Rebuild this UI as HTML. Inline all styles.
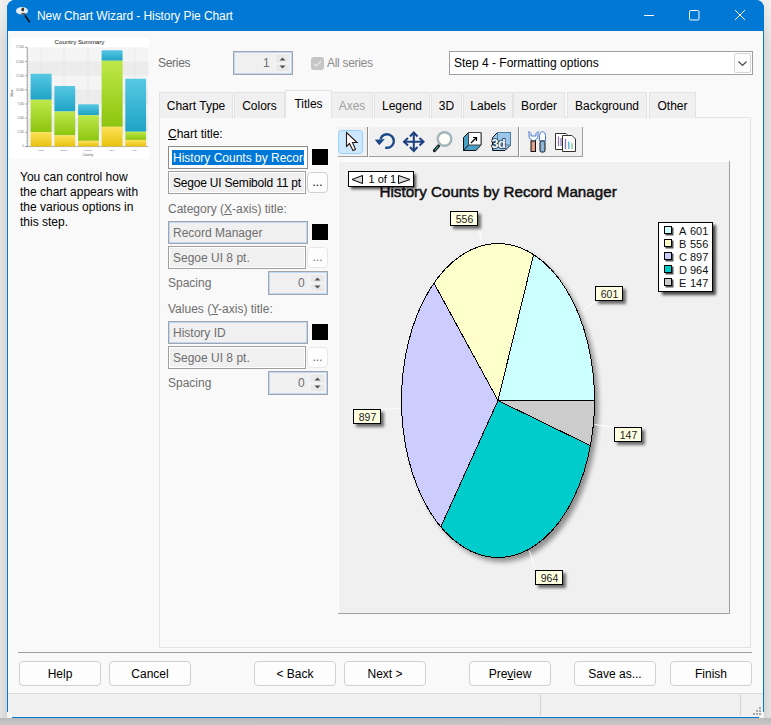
<!DOCTYPE html>
<html><head><meta charset="utf-8">
<style>
*{box-sizing:border-box;margin:0;padding:0}
html,body{width:771px;height:725px;overflow:hidden}
body{position:relative;background:#dedede;font-family:"Liberation Sans",sans-serif;font-size:12px;color:#000}
.a{position:absolute}
.t{position:absolute;white-space:nowrap;line-height:1}
#win{left:7px;top:0;width:757px;height:718px;border:1px solid #0078d4;border-radius:8px 8px 0 0;background:#f9f9f9;overflow:hidden}
#title{left:7px;top:0;width:757px;height:31px;background:#0078d4;border-radius:8px 8px 0 0}
.tab{position:absolute;top:92px;height:26px;background:#f0f0f0;border:1px solid #e3e3e3;border-bottom:none}
.tab span{position:absolute;top:6px;left:0;right:0;text-align:center;white-space:nowrap}
.box{position:absolute;border:1px solid #a0a0a0;background:#f0f0f0}
.btn{position:absolute;height:25px;width:82px;top:661px;background:#fdfdfd;border:1px solid #d0d0d0;border-radius:4px;text-align:center;line-height:24px}
.sw{position:absolute;left:312px;width:16px;height:16px;background:#000}
.dots{position:absolute;left:307px;width:21px;height:21px;border:1px solid #d0d0d0;border-radius:4px;background:#fdfdfd;text-align:center;line-height:19px}
.spin{position:absolute;border:1px solid #a2a6ac;background:#f0f0f0;box-shadow:inset 0 0 0 1px #bcd8f6}
.gray{color:#6e6e6e}
</style></head><body>
<div class="a" style="left:0;top:0;width:7px;height:725px;background:linear-gradient(180deg,rgba(255,255,255,.55) 0,rgba(255,255,255,0) 45px),linear-gradient(90deg,#e3e3e3,#d5d5d5)"></div><div class="a" style="left:7px;top:0;width:10px;height:10px;background:#eeeeee"></div>
<div class="a" style="left:764px;top:0;width:7px;height:725px;background:linear-gradient(180deg,rgba(255,255,255,.55) 0,rgba(255,255,255,0) 45px),linear-gradient(90deg,#d5d5d5,#e3e3e3)"></div><div class="a" style="left:754px;top:0;width:10px;height:10px;background:#eeeeee"></div>
<div class="a" style="left:0;top:718px;width:771px;height:7px;background:linear-gradient(180deg,#b9b9b9,#c8c8c8)"></div>

<div class="a" id="win"></div>
<div class="a" id="title"></div>
<svg class="a" style="left:0;top:0" width="771" height="31" viewBox="0 0 771 31">
<ellipse cx="22" cy="10.9" rx="6" ry="3.8" fill="#e6eff8"/>
<ellipse cx="22.8" cy="9.6" rx="1.4" ry="2" fill="#4a3220"/>
<path d="M20 14.6Q22.5 11.6 26.5 14.2Z" fill="#3a2a1a"/>
<path d="M24.8 15.2L29.8 22.2" stroke="#111" stroke-width="1.5"/>
<path d="M644 15.5H654" stroke="#fff" stroke-width="1"/>
<rect x="689.5" y="10.5" width="9.5" height="9.5" rx="1.2" fill="none" stroke="#fff" stroke-width="1"/>
<path d="M735 10L745 20M745 10L735 20" stroke="#fff" stroke-width="1"/>
</svg>
<div class="t" style="left:37px;top:10px;color:#fff;letter-spacing:-0.08px">New Chart Wizard - History Pie Chart</div>

<!-- thumbnail -->
<svg class="a" style="left:10px;top:38px" width="139" height="121" viewBox="10 38 139 121" font-family="Liberation Sans">
<defs>
<linearGradient id="gb" x1="0" y1="0" x2="0" y2="1"><stop offset="0" stop-color="#56c8e4"/><stop offset="1" stop-color="#1fa3c6"/></linearGradient>
<linearGradient id="gg" x1="0" y1="0" x2="0" y2="1"><stop offset="0" stop-color="#bfe84a"/><stop offset="1" stop-color="#8cc50e"/></linearGradient>
<linearGradient id="gy" x1="0" y1="0" x2="0" y2="1"><stop offset="0" stop-color="#fde25a"/><stop offset="1" stop-color="#e7c20c"/></linearGradient>
</defs>
<rect x="10" y="38" width="139" height="121" fill="#fff"/>
<rect x="27" y="47.4" width="121.5" height="99" fill="#f4f4f4"/>
<rect x="27" y="61.5" width="121.5" height="14.1" fill="#ececec"/><rect x="27" y="89.8" width="121.5" height="14.1" fill="#ececec"/><rect x="27" y="118.1" width="121.5" height="14.1" fill="#ececec"/><line x1="25" y1="47.4" x2="27" y2="47.4" stroke="#777" stroke-width=".6"/><text x="24" y="48.4" font-size="2.6" text-anchor="end" fill="#666">17,500</text><line x1="25" y1="61.5" x2="27" y2="61.5" stroke="#777" stroke-width=".6"/><text x="24" y="62.5" font-size="2.6" text-anchor="end" fill="#666">15,000</text><line x1="25" y1="75.7" x2="27" y2="75.7" stroke="#777" stroke-width=".6"/><text x="24" y="76.7" font-size="2.6" text-anchor="end" fill="#666">12,500</text><line x1="25" y1="89.8" x2="27" y2="89.8" stroke="#777" stroke-width=".6"/><text x="24" y="90.8" font-size="2.6" text-anchor="end" fill="#666">10,000</text><line x1="25" y1="104.0" x2="27" y2="104.0" stroke="#777" stroke-width=".6"/><text x="24" y="105.0" font-size="2.6" text-anchor="end" fill="#666">7,500</text><line x1="25" y1="118.1" x2="27" y2="118.1" stroke="#777" stroke-width=".6"/><text x="24" y="119.1" font-size="2.6" text-anchor="end" fill="#666">5,000</text><line x1="25" y1="132.3" x2="27" y2="132.3" stroke="#777" stroke-width=".6"/><text x="24" y="133.3" font-size="2.6" text-anchor="end" fill="#666">2,500</text><line x1="25" y1="146.4" x2="27" y2="146.4" stroke="#777" stroke-width=".6"/><text x="24" y="147.4" font-size="2.6" text-anchor="end" fill="#666">0</text><line x1="41" y1="47.4" x2="41" y2="146.4" stroke="#e2e2e2" stroke-width=".5"/><line x1="64" y1="47.4" x2="64" y2="146.4" stroke="#e2e2e2" stroke-width=".5"/><line x1="88" y1="47.4" x2="88" y2="146.4" stroke="#e2e2e2" stroke-width=".5"/><line x1="112" y1="47.4" x2="112" y2="146.4" stroke="#e2e2e2" stroke-width=".5"/><line x1="135" y1="47.4" x2="135" y2="146.4" stroke="#e2e2e2" stroke-width=".5"/>
<line x1="27.3" y1="47.5" x2="27.3" y2="146.8" stroke="#8a8a8a" stroke-width=".7"/><line x1="26.3" y1="48.00" x2="28" y2="48.00" stroke="#999" stroke-width=".4"/><line x1="26.3" y1="50.81" x2="28" y2="50.81" stroke="#999" stroke-width=".4"/><line x1="26.3" y1="53.62" x2="28" y2="53.62" stroke="#999" stroke-width=".4"/><line x1="26.3" y1="56.44" x2="28" y2="56.44" stroke="#999" stroke-width=".4"/><line x1="26.3" y1="59.25" x2="28" y2="59.25" stroke="#999" stroke-width=".4"/><line x1="26.3" y1="62.06" x2="28" y2="62.06" stroke="#999" stroke-width=".4"/><line x1="26.3" y1="64.87" x2="28" y2="64.87" stroke="#999" stroke-width=".4"/><line x1="26.3" y1="67.68" x2="28" y2="67.68" stroke="#999" stroke-width=".4"/><line x1="26.3" y1="70.50" x2="28" y2="70.50" stroke="#999" stroke-width=".4"/><line x1="26.3" y1="73.31" x2="28" y2="73.31" stroke="#999" stroke-width=".4"/><line x1="26.3" y1="76.12" x2="28" y2="76.12" stroke="#999" stroke-width=".4"/><line x1="26.3" y1="78.93" x2="28" y2="78.93" stroke="#999" stroke-width=".4"/><line x1="26.3" y1="81.74" x2="28" y2="81.74" stroke="#999" stroke-width=".4"/><line x1="26.3" y1="84.56" x2="28" y2="84.56" stroke="#999" stroke-width=".4"/><line x1="26.3" y1="87.37" x2="28" y2="87.37" stroke="#999" stroke-width=".4"/><line x1="26.3" y1="90.18" x2="28" y2="90.18" stroke="#999" stroke-width=".4"/><line x1="26.3" y1="92.99" x2="28" y2="92.99" stroke="#999" stroke-width=".4"/><line x1="26.3" y1="95.80" x2="28" y2="95.80" stroke="#999" stroke-width=".4"/><line x1="26.3" y1="98.62" x2="28" y2="98.62" stroke="#999" stroke-width=".4"/><line x1="26.3" y1="101.43" x2="28" y2="101.43" stroke="#999" stroke-width=".4"/><line x1="26.3" y1="104.24" x2="28" y2="104.24" stroke="#999" stroke-width=".4"/><line x1="26.3" y1="107.05" x2="28" y2="107.05" stroke="#999" stroke-width=".4"/><line x1="26.3" y1="109.86" x2="28" y2="109.86" stroke="#999" stroke-width=".4"/><line x1="26.3" y1="112.68" x2="28" y2="112.68" stroke="#999" stroke-width=".4"/><line x1="26.3" y1="115.49" x2="28" y2="115.49" stroke="#999" stroke-width=".4"/><line x1="26.3" y1="118.30" x2="28" y2="118.30" stroke="#999" stroke-width=".4"/><line x1="26.3" y1="121.11" x2="28" y2="121.11" stroke="#999" stroke-width=".4"/><line x1="26.3" y1="123.92" x2="28" y2="123.92" stroke="#999" stroke-width=".4"/><line x1="26.3" y1="126.74" x2="28" y2="126.74" stroke="#999" stroke-width=".4"/><line x1="26.3" y1="129.55" x2="28" y2="129.55" stroke="#999" stroke-width=".4"/><line x1="26.3" y1="132.36" x2="28" y2="132.36" stroke="#999" stroke-width=".4"/><line x1="26.3" y1="135.17" x2="28" y2="135.17" stroke="#999" stroke-width=".4"/><line x1="26.3" y1="137.98" x2="28" y2="137.98" stroke="#999" stroke-width=".4"/><line x1="26.3" y1="140.80" x2="28" y2="140.80" stroke="#999" stroke-width=".4"/><line x1="26.3" y1="143.61" x2="28" y2="143.61" stroke="#999" stroke-width=".4"/><line x1="26.3" y1="146.42" x2="28" y2="146.42" stroke="#999" stroke-width=".4"/>
<line x1="26" y1="146.6" x2="148.5" y2="146.6" stroke="#777" stroke-width=".6"/>
<rect x="30.6" y="73.8" width="21.0" height="25.9" fill="url(#gb)" rx=".8"/><rect x="30.6" y="99.7" width="21.0" height="32.4" fill="url(#gg)"/><rect x="30.6" y="132.1" width="21.0" height="14.3" fill="url(#gy)"/><rect x="54.4" y="85.9" width="20.8" height="25.6" fill="url(#gb)" rx=".8"/><rect x="54.4" y="111.5" width="20.8" height="23.9" fill="url(#gg)"/><rect x="54.4" y="135.4" width="20.8" height="11.0" fill="url(#gy)"/><rect x="78.1" y="104.2" width="20.8" height="11.0" fill="url(#gb)" rx=".8"/><rect x="78.1" y="115.2" width="20.8" height="25.6" fill="url(#gg)"/><rect x="78.1" y="140.8" width="20.8" height="5.6" fill="url(#gy)"/><rect x="101.6" y="50.2" width="21.0" height="10.5" fill="url(#gb)" rx=".8"/><rect x="101.6" y="60.7" width="21.0" height="66.1" fill="url(#gg)"/><rect x="101.6" y="126.8" width="21.0" height="19.6" fill="url(#gy)"/><rect x="125.3" y="78.8" width="20.8" height="52.9" fill="url(#gb)" rx=".8"/><rect x="125.3" y="131.7" width="20.8" height="8.2" fill="url(#gg)"/><rect x="125.3" y="139.9" width="20.8" height="6.5" fill="url(#gy)"/>
<text x="79.5" y="43.6" font-size="6.2" text-anchor="middle" fill="#111">Country Summary</text>
<text x="88" y="155.5" font-size="3" text-anchor="middle" fill="#555">Country</text>
<text x="12.5" y="97" font-size="3" fill="#555" transform="rotate(-90 12.5 97)">Value</text>
<g font-size="2.5" fill="#666" text-anchor="middle"><text x="41" y="150.5">India</text><text x="64" y="150.5">Brazil</text><text x="88" y="150.5">France</text><text x="112" y="150.5">Italy</text><text x="135" y="150.5">USA</text></g>
</svg>


<div class="t" style="left:20px;top:170px;line-height:15px;white-space:normal;width:130px">You can control how<br>the chart appears with<br>the various options in<br>this step.</div>

<div class="t gray" style="left:158px;top:57px;letter-spacing:-0.3px">Series</div>
<div class="spin" style="left:233px;top:51px;width:60px;height:24px"></div><svg class="a" style="left:233px;top:51px" width="60" height="24" viewBox="0 0 60 24">
<rect x="42" y="3" width="15" height="9" fill="#e9e9e9" stroke="#f6f6f6"/>
<rect x="42" y="13" width="15" height="8" fill="#e9e9e9" stroke="#f6f6f6"/>
<path d="M46.5 9.5L49.5 6.5L52.5 9.5Z" fill="#555"/>
<path d="M46.5 14.5L49.5 17.5L52.5 14.5Z" fill="#555"/>
</svg>
<div class="t gray" style="left:263px;top:57px">1</div>

<div class="a" style="left:311px;top:57px;width:13px;height:13px;background:#c6c6c6;border-radius:3px"></div><svg class="a" style="left:311px;top:57px" width="13" height="13"><path d="M3 6.8L5.3 9L10 4.2" fill="none" stroke="#ececec" stroke-width="1.1"/></svg>
<div class="t" style="left:327px;top:57px;color:#8a8a8a;letter-spacing:-0.3px">All series</div>

<div class="a" style="left:449px;top:51px;width:304px;height:24px;background:#fff;border:1px solid #a0a0a0"></div>
<div class="t" style="left:454px;top:57px">Step 4 - Formatting options</div><div class="a" style="left:734px;top:53px;width:17px;height:20px;border:1px solid #d6d6d6;border-radius:2px;background:#fcfcfc"></div><svg class="a" style="left:734px;top:53px" width="17" height="20"><path d="M4.5 8.5L8.5 12.5L12.5 8.5" fill="none" stroke="#444" stroke-width="1.1"/></svg>

<!-- panel -->
<div class="a" style="left:159px;top:117px;width:592px;height:531px;border:1px solid #e3e3e3;background:#f9f9f9"></div>

<div class="tab" style="left:159px;width:74px"><span>Chart Type</span></div>
<div class="tab" style="left:234px;width:51px"><span>Colors</span></div>
<div class="tab" style="left:374px;width:56px"><span>Legend</span></div>
<div class="tab" style="left:431px;width:31px"><span>3D</span></div>
<div class="tab" style="left:463px;width:50px"><span>Labels</span></div>
<div class="tab" style="left:513px;width:52px"><span>Border</span></div>
<div class="tab" style="left:567px;width:80px"><span>Background</span></div>
<div class="tab" style="left:649px;width:47px"><span>Other</span></div>
<div class="tab" style="left:331px;width:42px;color:#a0a0a0"><span>Axes</span></div>
<div class="tab" style="left:285px;top:90px;height:28px;width:47px;background:#f9f9f9"><span style="top:6px">Titles</span></div>


<!-- form -->
<div class="t" style="left:168px;top:128px"><u>C</u>hart title:</div>
<div class="a" style="left:168px;top:146px;width:140px;height:23px;border:1px solid #8c8c8c;background:#fff;overflow:hidden">
 <div class="a" style="left:3px;top:3px;width:132px;height:15px;background:#0078d7"></div>
 <div class="t" style="left:4px;top:5px;color:#fff">History Counts by Record</div>
</div>
<div class="sw" style="top:149px"></div>
<div class="a" style="left:168px;top:171px;width:138px;height:23px;border:1px solid #a0a0a0;background:#f0f0f0;box-shadow:inset 0 0 0 1px #fff"></div>
<div class="t" style="left:173px;top:177px;letter-spacing:-0.2px">Segoe UI Semibold 11 pt</div>
<div class="dots" style="top:172px">...</div>
<div class="t gray" style="left:168px;top:203px">Category (<u>X</u>-axis) title:</div>
<div class="a" style="left:168px;top:221px;width:140px;height:23px;border:1px solid #a2a6ac;background:#f0f0f0;box-shadow:inset 0 0 0 1px #bcd8f6"></div>
<div class="t gray" style="left:173px;top:227px">Record Manager</div>
<div class="sw" style="top:224px"></div>
<div class="a" style="left:168px;top:246px;width:138px;height:23px;border:1px solid #a0a0a0;background:#f0f0f0;box-shadow:inset 0 0 0 1px #fff"></div>
<div class="t gray" style="left:173px;top:252px">Segoe UI 8 pt.</div>
<div class="dots" style="top:247px;border-color:#e8e8e8;color:#6e6e6e">...</div>
<div class="t gray" style="left:168px;top:277px">Spacing</div>
<div class="spin" style="left:268px;top:271px;width:60px;height:24px"></div><svg class="a" style="left:268px;top:271px" width="60" height="24" viewBox="0 0 60 24">
<rect x="42" y="3" width="15" height="9" fill="#e9e9e9" stroke="#f6f6f6"/>
<rect x="42" y="13" width="15" height="8" fill="#e9e9e9" stroke="#f6f6f6"/>
<path d="M46.5 9.5L49.5 6.5L52.5 9.5Z" fill="#555"/>
<path d="M46.5 14.5L49.5 17.5L52.5 14.5Z" fill="#555"/>
</svg>
<div class="t gray" style="left:298px;top:277px">0</div>
<div class="t gray" style="left:168px;top:303px">Values (<u>Y</u>-axis) title:</div>
<div class="a" style="left:168px;top:321px;width:140px;height:23px;border:1px solid #a2a6ac;background:#f0f0f0;box-shadow:inset 0 0 0 1px #bcd8f6"></div>
<div class="t gray" style="left:173px;top:327px">History ID</div>
<div class="sw" style="top:324px"></div>
<div class="a" style="left:168px;top:346px;width:138px;height:23px;border:1px solid #a0a0a0;background:#f0f0f0;box-shadow:inset 0 0 0 1px #fff"></div>
<div class="t gray" style="left:173px;top:352px">Segoe UI 8 pt.</div>
<div class="dots" style="top:347px;border-color:#e8e8e8;color:#6e6e6e">...</div>
<div class="t gray" style="left:168px;top:377px">Spacing</div>
<div class="spin" style="left:268px;top:371px;width:60px;height:24px"></div><svg class="a" style="left:268px;top:371px" width="60" height="24" viewBox="0 0 60 24">
<rect x="42" y="3" width="15" height="9" fill="#e9e9e9" stroke="#f6f6f6"/>
<rect x="42" y="13" width="15" height="8" fill="#e9e9e9" stroke="#f6f6f6"/>
<path d="M46.5 9.5L49.5 6.5L52.5 9.5Z" fill="#555"/>
<path d="M46.5 14.5L49.5 17.5L52.5 14.5Z" fill="#555"/>
</svg>
<div class="t gray" style="left:298px;top:377px">0</div>


<!-- toolbar -->
<svg class="a" style="left:336px;top:124px" width="250" height="36" viewBox="336 124 250 36">
<rect x="338" y="127" width="245" height="30" fill="#f0f0f0"/>
<line x1="338" y1="156.5" x2="583" y2="156.5" stroke="#a0a0a0"/>
<line x1="582.5" y1="127" x2="582.5" y2="157" stroke="#a0a0a0"/>
<line x1="367.5" y1="127" x2="367.5" y2="157" stroke="#8c8c8c"/>
<line x1="368.5" y1="127" x2="368.5" y2="157" stroke="#fff"/>
<line x1="518.5" y1="127" x2="518.5" y2="157" stroke="#8c8c8c"/>
<line x1="519.5" y1="127" x2="519.5" y2="157" stroke="#fff"/>
<rect x="338.5" y="130.5" width="24" height="23" rx="3" fill="#cce8ff" stroke="#99d1ff"/>
<!-- arrow -->
<path d="M346.5 132.5V146.5L349.5 143.5L353 150.5L355.5 149.5L352.5 142.5H357Z" fill="#fff" stroke="#2a1a10" stroke-width="1.1" stroke-linejoin="miter"/>
<!-- undo -->
<path d="M380.6 138.8A6.8 6.8 0 1 1 385.2 147.6" fill="none" stroke="#1a4a88" stroke-width="2.5"/>
<path d="M374.8 139.8L384.8 139L379.3 145.2Z" fill="#1a4a88"/>
<!-- move -->
<g fill="none" stroke="#1c3f80" stroke-width="2">
<path d="M413.8 133V151M404.5 141.8H423"/>
<path d="M410 136.5L413.8 132.5L417.5 136.5M410 147L413.8 151L417.5 147M408 138L404 141.8L408 145.5M419.5 138L423.5 141.8L419.5 145.5"/>
</g>
<!-- magnifier -->
<path d="M438.5 146L434.5 150.5" stroke="#111" stroke-width="3.2" stroke-linecap="round"/>
<path d="M438.3 146.2L434.7 150.3" stroke="#3aa39a" stroke-width="1.2"/>
<circle cx="444.5" cy="139" r="6.8" fill="#fffef8" stroke="#a4b4bc" stroke-width="2.4"/>
<!-- box1 -->
<path d="M463.5 137.5L468.5 132.5H481V145L476 150.5H463.5Z" fill="#4a9fc4" stroke="#111" stroke-width="1"/>
<path d="M468.5 132.5H481V145H468.5Z" fill="#fff" stroke="#444" stroke-width="1"/>
<path d="M468.5 145L463.5 150.5" stroke="#111"/>
<path d="M471 143L476.5 137.5M473 137.5H476.5V141" fill="none" stroke="#000" stroke-width="1.2"/>
<!-- 3d box -->
<path d="M492.5 137.5L497.5 132.5H510.5V145L505 150.5H492.5Z" fill="#9cc7ea" stroke="#111" stroke-width="1"/>
<path d="M497.5 132.5H510.5V145H497.5ZM497.5 145L492.5 150.5" fill="none" stroke="#4a7fa8"/>
<text x="491.5" y="148" font-family="Liberation Sans" font-weight="bold" font-size="12.5" letter-spacing="-0.5" fill="#fff" stroke="#12324a" stroke-width="1.6" paint-order="stroke">3d</text>
<!-- tools -->
<path d="M529 131.5V136Q529 139 531.5 139.5V141H535.5V139.5Q538 139 538 136V131.5L536 133.5V136H531V133.5Z" fill="#fff" stroke="#4a78d0" stroke-width="1"/>
<rect x="531" y="141" width="4.5" height="10.5" fill="#e2a08a" stroke="#111" stroke-width="1"/>
<path d="M539.5 141V135.5Q539.5 132 542.5 131.5Q545.5 132 545.5 135.5V141Z" fill="#fff" stroke="#4a78d0" stroke-width="1"/>
<rect x="540" y="141" width="5" height="11" rx="1.5" fill="#8fb8dc" stroke="#111" stroke-width="1"/>
<!-- docs -->
<path d="M555.5 133.5H566L567 134.5V149.5H555.5Z" fill="#fff" stroke="#333"/>
<path d="M562.5 135.5H572L575.5 139V151.5H562.5Z" fill="#fff" stroke="#333"/>
<path d="M558.5 136.5V146M561 138V146" stroke="#8c6fb0" stroke-width="1.2"/>
<path d="M565.5 139V149" stroke="#8c6fb0" stroke-width="1.3"/>
<path d="M568.8 141.5V149" stroke="#4aa8d8" stroke-width="1.3"/>
<path d="M572 143V149" stroke="#80c880" stroke-width="1.3"/>
</svg>

<!-- chart area -->
<svg class="a" style="left:338px;top:161px" width="392" height="453" viewBox="338 161 392 453" font-family="Liberation Sans">
<defs><filter id="bl" x="-50%" y="-50%" width="200%" height="200%"><feGaussianBlur stdDeviation="1.5"/></filter>
<filter id="bl2" x="-20%" y="-20%" width="140%" height="140%"><feGaussianBlur stdDeviation="2.5"/></filter>
<filter id="bl1" x="-50%" y="-50%" width="200%" height="200%"><feGaussianBlur stdDeviation=".7"/></filter></defs>
<rect x="338" y="161" width="392" height="453" fill="#f0f0f0"/>
<line x1="338" y1="161.5" x2="729" y2="161.5" stroke="#fff"/>
<line x1="338.5" y1="161" x2="338.5" y2="613" stroke="#fff"/>
<line x1="729.5" y1="161" x2="729.5" y2="614" stroke="#a0a0a0"/>
<line x1="338" y1="613.5" x2="730" y2="613.5" stroke="#a0a0a0"/>
<ellipse cx="502" cy="405" rx="96.5" ry="157" fill="#000" opacity=".4" filter="url(#bl2)"/>
<path d="M498 400.5L594.50 400.50A96.5 157 0 0 0 533.59 254.57Z" fill="#ccffff"/>
<path d="M498 400.5L533.59 254.57A96.5 157 0 0 0 433.93 283.10Z" fill="#ffffcc"/>
<path d="M498 400.5L433.93 283.10A96.5 157 0 0 0 440.78 526.92Z" fill="#ccccff"/>
<path d="M498 400.5L440.78 526.92A96.5 157 0 0 0 590.42 445.67Z" fill="#00cccc"/>
<path d="M498 400.5L590.42 445.67A96.5 157 0 0 0 594.50 400.50Z" fill="#cccccc"/>
<g stroke="#000" stroke-width="1" fill="none" shape-rendering="crispEdges">
<ellipse cx="498" cy="400.5" rx="96.5" ry="157"/>
<path d="M498 400.5L594.5 400.5M498 400.5L533.59 254.57M498 400.5L433.93 283.10M498 400.5L440.78 526.92M498 400.5L590.42 445.67"/>
</g>
<g stroke="#fff" stroke-width="1" fill="none">
<path d="M478.5 225L482 245"/>
<path d="M595 301.5L583 311"/>
<path d="M381 409.5L401 408.5"/>
<path d="M594.5 424.5L614 427.5"/>
<path d="M529.5 551L535.5 570"/>
</g>
<rect x="453" y="214" width="28" height="15" fill="#000" opacity=".55" filter="url(#bl)"/>
<rect x="450.5" y="211.5" width="27" height="14" fill="#ffffe1" stroke="#000"/>
<text x="464.5" y="223" text-anchor="middle" font-size="10.5" fill="#222">556</text><rect x="598" y="289" width="28" height="15" fill="#000" opacity=".55" filter="url(#bl)"/>
<rect x="595.5" y="286.5" width="27" height="14" fill="#ffffe1" stroke="#000"/>
<text x="609.5" y="298" text-anchor="middle" font-size="10.5" fill="#222">601</text><rect x="356" y="412" width="28" height="15" fill="#000" opacity=".55" filter="url(#bl)"/>
<rect x="353.5" y="409.5" width="27" height="14" fill="#ffffe1" stroke="#000"/>
<text x="367.5" y="421" text-anchor="middle" font-size="10.5" fill="#222">897</text><rect x="617" y="430" width="28" height="15" fill="#000" opacity=".55" filter="url(#bl)"/>
<rect x="614.5" y="427.5" width="27" height="14" fill="#ffffe1" stroke="#000"/>
<text x="628.5" y="439" text-anchor="middle" font-size="10.5" fill="#222">147</text><rect x="538" y="573" width="28" height="15" fill="#000" opacity=".55" filter="url(#bl)"/>
<rect x="535.5" y="570.5" width="27" height="14" fill="#ffffe1" stroke="#000"/>
<text x="549.5" y="582" text-anchor="middle" font-size="10.5" fill="#222">964</text>
<text x="379.5" y="197" font-size="15.2" fill="#111" stroke="#111" stroke-width=".5">History Counts by Record Manager</text>
<rect x="351" y="174" width="65" height="15" fill="#000" opacity=".7" filter="url(#bl)"/>
<rect x="348.5" y="171.5" width="65" height="15" fill="#fff" stroke="#000"/>
<path d="M352 179.5L362.5 175.5V183.5Z" fill="#ddd" stroke="#000"/>
<text x="368.5" y="183" font-size="11" fill="#000">1 of 1</text>
<path d="M398.5 175.5V183.5L410 179.5Z" fill="#ddd" stroke="#000"/>
<rect x="662" y="225" width="54" height="70" fill="#000" opacity=".7" filter="url(#bl)"/>
<rect x="658.5" y="222.5" width="54" height="69" fill="#fff" stroke="#000"/>
<rect x="665.5" y="227.5" width="8" height="8" fill="#555" filter="url(#bl1)"/><rect x="664.5" y="226.5" width="7" height="7" fill="#ccffff" stroke="#000"/><text x="679" y="235" font-size="11" fill="#111">A</text><text x="690" y="235" font-size="11" fill="#111">601</text><rect x="665.5" y="240.5" width="8" height="8" fill="#555" filter="url(#bl1)"/><rect x="664.5" y="239.5" width="7" height="7" fill="#ffffcc" stroke="#000"/><text x="679" y="248" font-size="11" fill="#111">B</text><text x="690" y="248" font-size="11" fill="#111">556</text><rect x="665.5" y="253.5" width="8" height="8" fill="#555" filter="url(#bl1)"/><rect x="664.5" y="252.5" width="7" height="7" fill="#ccccff" stroke="#000"/><text x="679" y="261" font-size="11" fill="#111">C</text><text x="690" y="261" font-size="11" fill="#111">897</text><rect x="665.5" y="266.5" width="8" height="8" fill="#555" filter="url(#bl1)"/><rect x="664.5" y="265.5" width="7" height="7" fill="#00cccc" stroke="#000"/><text x="679" y="274" font-size="11" fill="#111">D</text><text x="690" y="274" font-size="11" fill="#111">964</text><rect x="665.5" y="279.5" width="8" height="8" fill="#555" filter="url(#bl1)"/><rect x="664.5" y="278.5" width="7" height="7" fill="#cccccc" stroke="#000"/><text x="679" y="287" font-size="11" fill="#111">E</text><text x="690" y="287" font-size="11" fill="#111">147</text>
</svg>

<!-- bottom -->
<div class="a" style="left:18px;top:652px;width:734px;height:1px;background:#a0a0a0"></div>
<div class="btn" style="left:19px">Help</div>
<div class="btn" style="left:109px">Cancel</div>
<div class="btn" style="left:254px">&lt; Back</div>
<div class="btn" style="left:344px">Next &gt;</div>
<div class="btn" style="left:469px">Pre<u>v</u>iew</div>
<div class="btn" style="left:574px">Save as...</div>
<div class="btn" style="left:670px">Finish</div>
<div class="a" style="left:8px;top:693px;width:755px;height:24px;background:#f0f0f0;border-top:1px solid #dcdcdc"></div><div class="a" style="left:540px;top:695px;width:1px;height:21px;background:#d4d4d4"></div><div class="a" style="left:740px;top:695px;width:1px;height:21px;background:#d4d4d4"></div><div class="a" style="left:7px;top:712px;width:5px;height:6px;background:#f4f4f4"></div><div class="a" style="left:759px;top:712px;width:5px;height:6px;background:#f4f4f4"></div><svg class="a" style="left:750px;top:704px" width="12" height="12"><g fill="#a8a8a8"><rect x="9" y="3" width="2" height="2"/><rect x="6" y="6" width="2" height="2"/><rect x="9" y="6" width="2" height="2"/><rect x="3" y="9" width="2" height="2"/><rect x="6" y="9" width="2" height="2"/><rect x="9" y="9" width="2" height="2"/></g></svg>
</body></html>
